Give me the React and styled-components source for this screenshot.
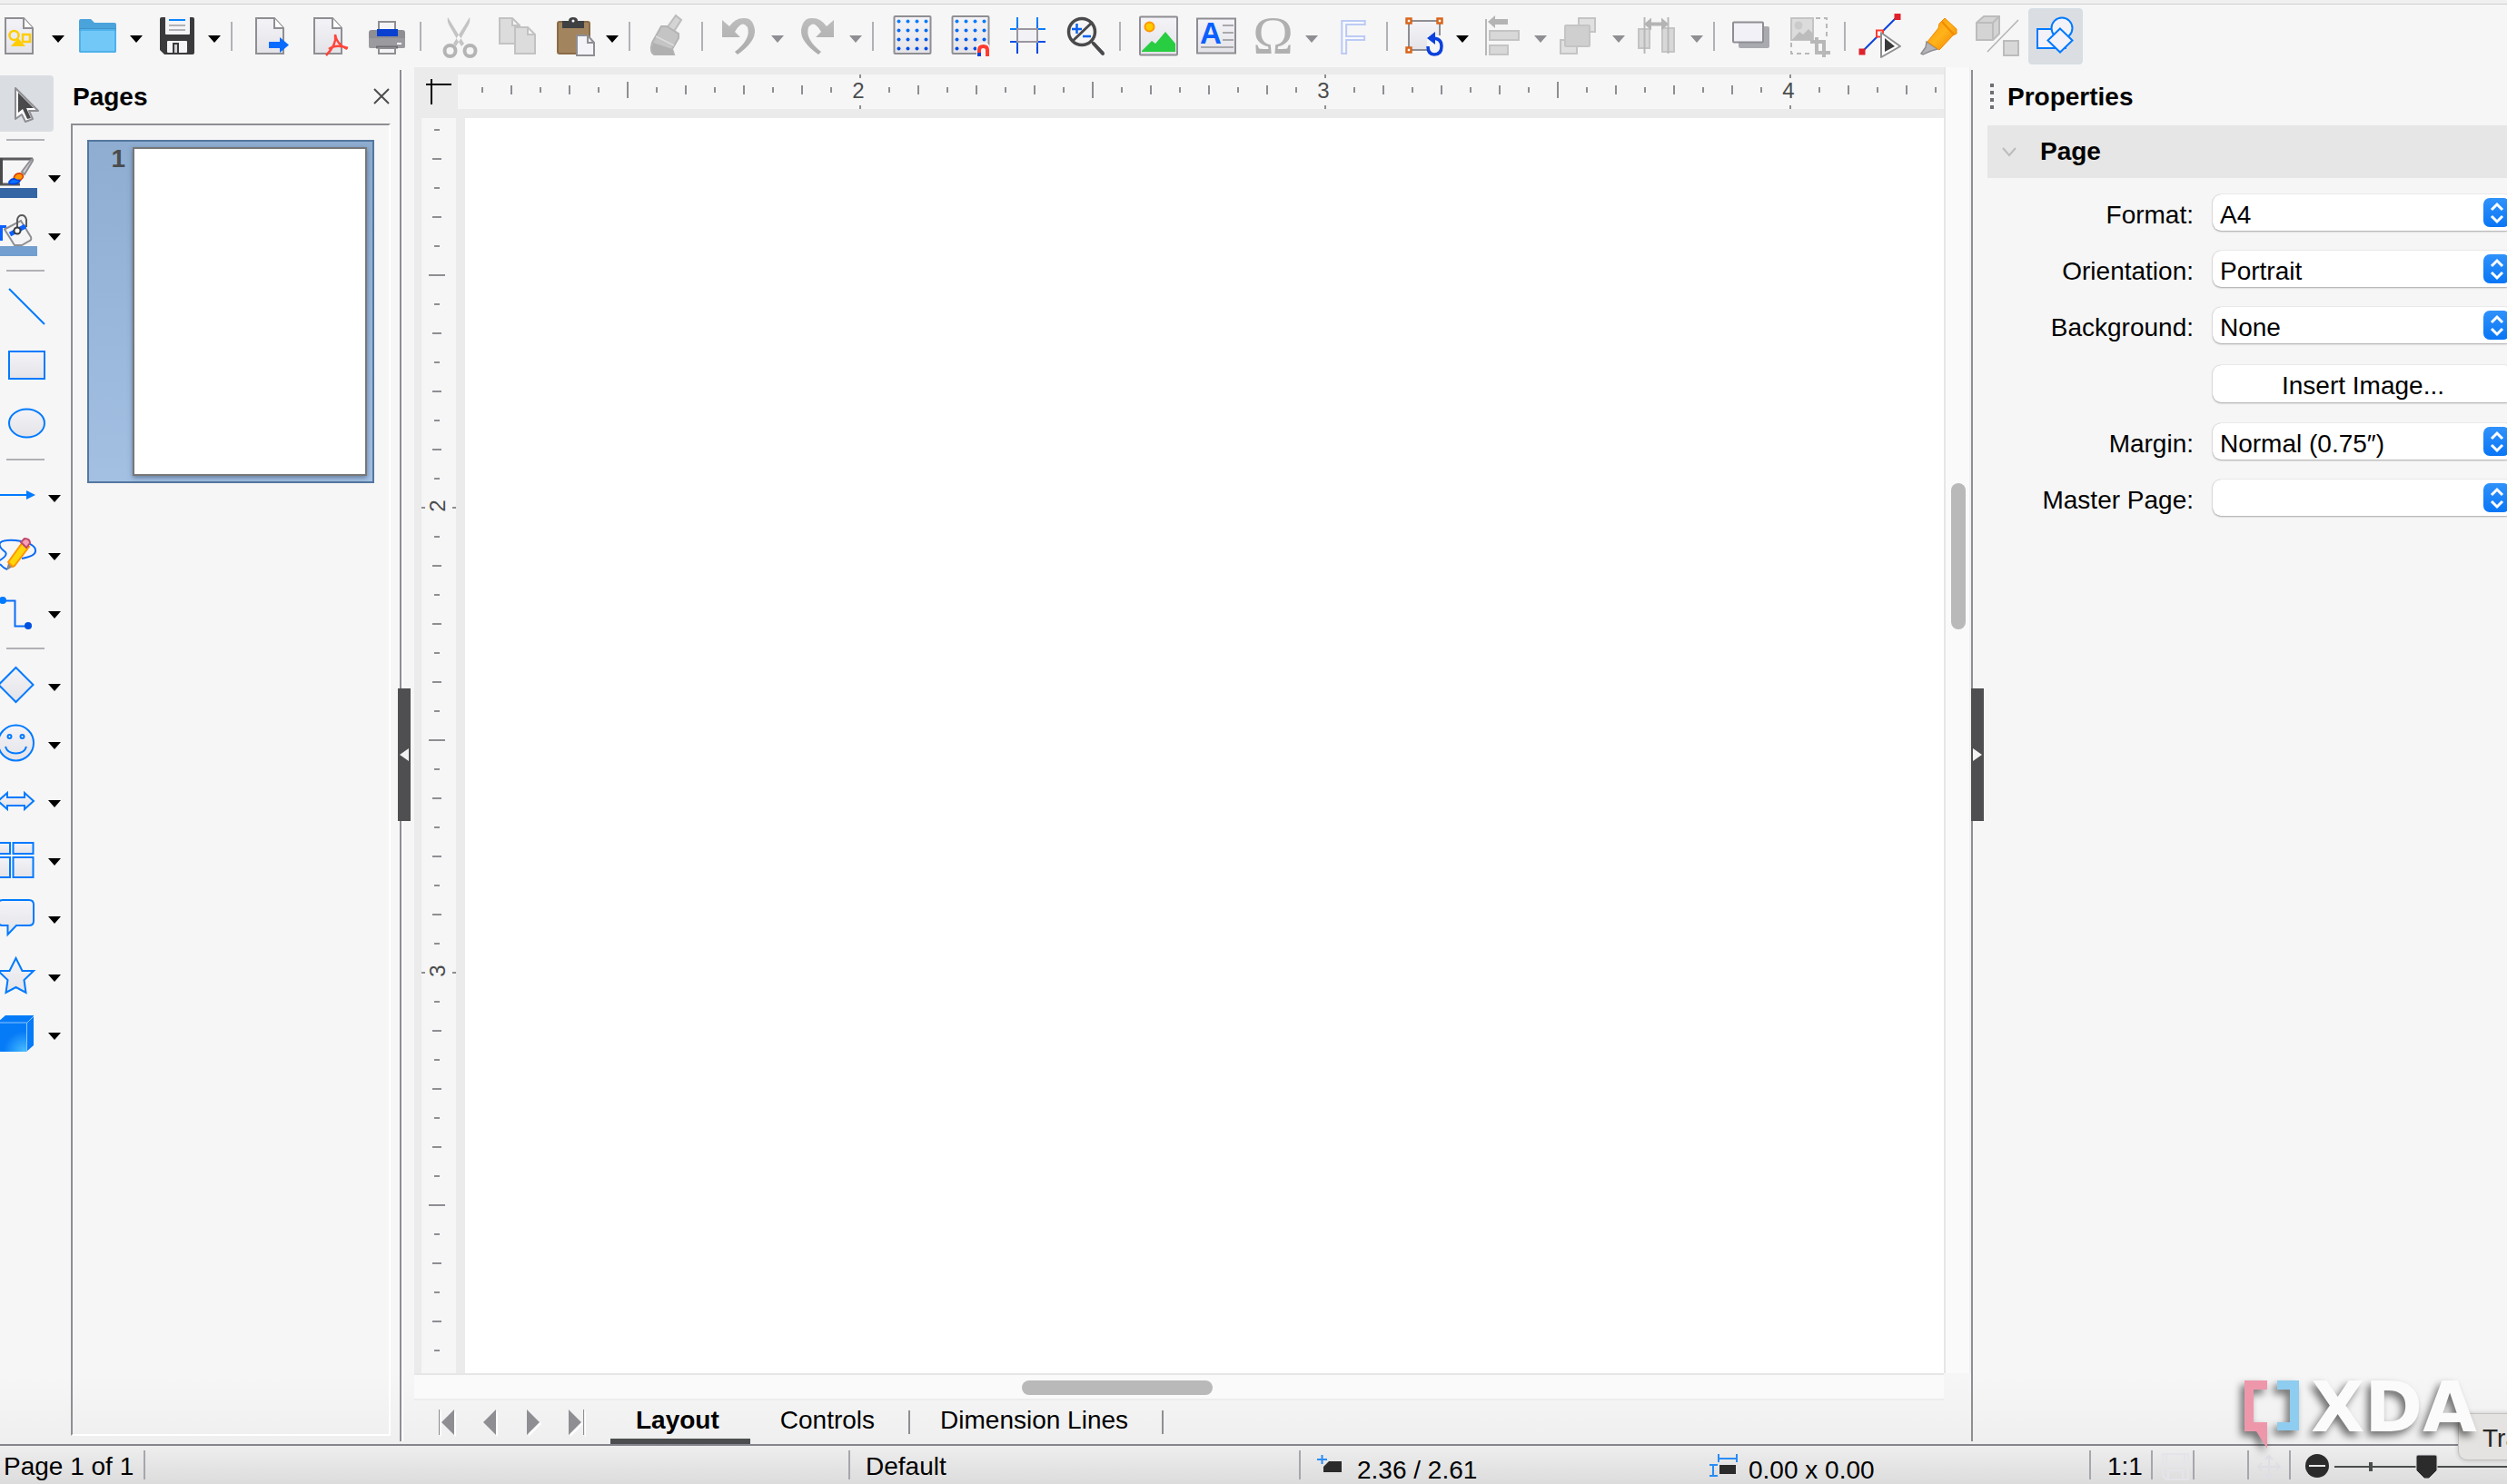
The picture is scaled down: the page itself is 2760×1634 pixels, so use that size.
import React, { useState } from "react";
import styled, { createGlobalStyle } from "styled-components";

const GlobalStyle = createGlobalStyle`
  * {
    box-sizing: border-box;
  }

  body {
    margin: 0;
    overflow: hidden;
    color: #000;
    font-family: "Liberation Sans", Arial, sans-serif;
    font-size: 28px;
    line-height: 32px;
  }

  button,
  select {
    margin: 0;
    padding: 0;
    border: none;
    background: none;
    color: inherit;
    font: inherit;
  }

  svg {
    display: block;
    flex: none;
    overflow: visible;
  }
`;

const Window = styled.div`
  position: relative;
  display: flex;
  flex-direction: column;
  height: 100vh;
  overflow: hidden;
  background: linear-gradient(
    #f6f6f6 0,
    #f6f6f6 calc(100% - 120px),
    #efefef calc(100% - 44px),
    #dcdcdc 100%
  );
`;

/* ---------- top toolbar ---------- */

const Toolbar = styled.header`
  flex: none;
  display: flex;
  align-items: center;
  height: 74px;
  padding-top: 5px;
  overflow: hidden;
  background: linear-gradient(#f0f0f0 4px, #cfcfcf 4px, #cfcfcf 5px, #f6f6f6 5px);
`;

const ToolbarItems = styled.div`
  display: flex;
  align-items: center;
  margin-left: -11px;
`;

const ToolButton = styled.button`
  flex: none;
  display: flex;
  align-items: center;
  justify-content: center;
  width: 60px;
  height: 62px;
  margin: 0 2px;
  border: 1px solid ${({ $active }) => ($active ? "#d3dfe6" : "transparent")};
  border-radius: 4px;
  background: ${({ $active }) => ($active ? "#dadde2" : "none")};
`;

const ArrowButton = styled.button`
  flex: none;
  display: flex;
  align-items: center;
  justify-content: center;
  width: 22px;
  height: 62px;
  padding-top: 6px;
`;

const Separator = styled.div`
  flex: none;
  width: 2px;
  height: 32px;
  margin: 0 7px;
  background: #b1b1b6;
`;

/* ---------- main area ---------- */

const Body = styled.main`
  flex: 1;
  display: flex;
  min-height: 0;
`;

const Tools = styled.nav`
  flex: none;
  width: 78px;
  padding-top: 8px;
`;

const ToolRow = styled.div`
  display: flex;
  align-items: center;
  height: 64px;
`;

const SideTool = styled.button`
  display: flex;
  align-items: center;
  justify-content: flex-end;
  width: ${({ $split }) => ($split ? 48 : 59)}px;
  height: 62px;
  padding-right: 6px;
  border-radius: 0 4px 4px 0;
  background: ${({ $active }) => ($active ? "#dadde2" : "none")};
`;

const SideArrow = styled(ArrowButton)`
  width: 24px;
`;

const SideSeparator = styled.div`
  width: 42px;
  height: 2px;
  margin: 7px 0 7px 7px;
  background: #b1b1b6;
`;

const PagesPanel = styled.aside`
  flex: none;
  display: flex;
  flex-direction: column;
  width: 362px;
  padding: 0 10px 9px 0;
`;

const PanelHeader = styled.div`
  flex: none;
  display: flex;
  align-items: center;
  justify-content: space-between;
  height: 62px;
  padding: 2px 2px 0;
`;

const PanelTitle = styled.h2`
  margin: 0;
  padding-top: 2px;
  font-size: 28px;
  line-height: 32px;
  font-weight: bold;
`;

const PageList = styled.div`
  flex: 1;
  padding: 16px;
  border: 2px solid;
  border-color: #8e8e93 #fff #fff #8e8e93;
`;

const PageItem = styled.button`
  display: flex;
  width: 316px;
  height: 378px;
  padding: 6px;
  border: 2px solid #54779f;
  background: linear-gradient(#8eadd0, #a3c0e3);
`;

const PageNumber = styled.span`
  width: 42px;
  padding-right: 8px;
  color: #4a4c4e;
  font-weight: bold;
  line-height: 26px;
  text-align: right;
`;

const PageThumb = styled.span`
  flex: 1;
  align-self: stretch;
  border: 2px solid #777;
  background: #fff;
  box-shadow: 0 2px 5px rgba(40, 60, 90, 0.5);
`;

const Splitter = styled.div`
  position: relative;
  flex: none;
  width: ${({ $wide }) => ($wide ? 16 : 2)}px;
  margin: 3px 0;
  border-left: 2px solid #8e8e93;
  box-shadow: ${({ $wide }) => ($wide ? "inset 2px 0 #fff" : "none")};
`;

const SplitterHandle = styled.button`
  position: absolute;
  z-index: 1;
  top: calc(50% - 74px);
  left: ${({ $right }) => ($right ? -2 : -4)}px;
  display: flex;
  align-items: center;
  justify-content: center;
  width: 14px;
  height: 146px;
  background: #4f4f51;
`;

const Workspace = styled.section`
  flex: 1;
  display: flex;
  flex-direction: column;
  min-width: 0;
`;

const Editor = styled.div`
  flex: 1;
  display: grid;
  grid-template-columns: 56px 1fr 30px;
  grid-template-rows: 56px 1fr 30px;
  min-height: 0;
`;

const RulerCorner = styled.div`
  padding: 13px;
  background: #ebebeb;
`;

const TopRuler = styled.div`
  min-width: 0;
  padding: 8px 0 10px;
  background: #ebebeb;
`;

const TopRulerScale = styled.div`
  height: 38px;
  margin-left: -8px;
  overflow: hidden;
  background: #f6f6f6;
`;

const LeftRuler = styled.div`
  min-height: 0;
  padding: 0 10px 0 8px;
  background: #ebebeb;
`;

const LeftRulerScale = styled.div`
  height: 100%;
  overflow: hidden;
  background: #f6f6f6;
`;

const Canvas = styled.div`
  background: #fff;
`;

const VerticalScroll = styled.div`
  grid-column: 3;
  grid-row: 1 / 3;
  padding: 458px 4px 0 6px;
  border-left: 2px solid #e6e6e6;
  border-right: 2px solid #f0f0f0;
  background: #fafafa;
`;

const HorizontalScroll = styled.div`
  grid-column: 1 / 3;
  grid-row: 3;
  padding: 6px 0 0 669px;
  border-top: 2px solid #e6e6e6;
  border-bottom: 2px solid #ececec;
  background: #fafafa;
`;

const Thumb = styled.div`
  width: ${({ $vertical }) => ($vertical ? 16 : 210)}px;
  height: ${({ $vertical }) => ($vertical ? 161 : 16)}px;
  border-radius: 8px;
  background: #b9b9b9;
`;

const TabBar = styled.div`
  flex: none;
  display: flex;
  align-items: center;
  height: 48px;
  padding-left: 12px;
`;

const NavButton = styled.button`
  display: flex;
  align-items: center;
  justify-content: center;
  width: 47px;
  height: 46px;
`;

const Tab = styled.button`
  height: 48px;
  padding: ${({ $active }) => ($active ? "2px 34px 0 28px" : "0 37px 4px 33px")};
  border-bottom: ${({ $active }) => ($active ? "6px solid #4b4d4e" : "none")};
  font-weight: ${({ $active }) => ($active ? "bold" : "normal")};
`;

const TabGap = styled.div`
  width: 16px;
`;

const TabDivider = styled.div`
  width: 2px;
  height: 26px;
  background: #8e8e93;
`;

/* ---------- properties ---------- */

const Properties = styled.aside`
  flex: none;
  width: 588px;
`;

const DeckHeader = styled.div`
  display: flex;
  align-items: center;
  gap: 14px;
  height: 64px;
  padding-left: 18px;
`;

const SectionHeader = styled.button`
  display: flex;
  align-items: center;
  gap: 26px;
  width: calc(100% - 16px);
  height: 58px;
  margin-left: 16px;
  padding-left: 16px;
  background: #e6e6e6;
  font-weight: bold;
`;

const Form = styled.form`
  display: grid;
  grid-template-columns: 243px 1fr;
  column-gap: 21px;
  row-gap: 22px;
  align-items: center;
  margin: 18px -7px 0 0;
`;

const Label = styled.label`
  padding-top: 5px;
  text-align: right;
`;

const SelectBox = styled.div`
  position: relative;
`;

const Select = styled.select`
  display: block;
  width: 100%;
  height: 40px;
  padding: 5px 40px 0 8px;
  appearance: none;
  border-radius: 9px;
  background: #fff;
  box-shadow: 0 0 1px rgba(0, 0, 0, 0.35), 0 1px 2px rgba(0, 0, 0, 0.3);
`;

const Stepper = styled.span`
  position: absolute;
  top: 4px;
  right: 4px;
  padding: 4px 6px;
  width: 29px;
  height: 32px;
  border-radius: 7px;
  background: linear-gradient(#2f92fb, #0a76f5);
  pointer-events: none;
`;

const PushButton = styled.button`
  grid-column: 2;
  height: 41px;
  margin: 2px 0 1px;
  padding-top: 4px;
  border-radius: 9px;
  background: #fff;
  box-shadow: 0 0 1px rgba(0, 0, 0, 0.35), 0 1px 2px rgba(0, 0, 0, 0.3);
`;

/* ---------- status bar ---------- */

const StatusBar = styled.footer`
  flex: none;
  display: flex;
  align-items: center;
  height: 44px;
  border-top: 2px solid #85858d;
`;

const StatusCell = styled.div`
  flex: ${({ $grow, $width }) => ($grow ? `${$grow} 1 20px` : `0 0 ${$width}px`)};
  display: flex;
  align-items: center;
  height: 32px;
  padding-top: 3px;
  padding-left: ${({ $pad }) => $pad || 0}px;
  border-right: 2px solid #a6a6ac;
  white-space: nowrap;
`;

const Readout = styled.div`
  flex: 1 1 0;
  display: flex;
  align-items: center;
  gap: 12px;
  padding-left: ${({ $pad }) => $pad}px;
`;

const ReadoutText = styled.span`
  padding-top: 8px;
`;

const ZoomArea = styled.div`
  flex: 0 0 238px;
  padding-left: 14px;
`;

const Tooltip = styled.div`
  position: absolute;
  right: -60px;
  bottom: 26px;
  width: 114px;
  height: 52px;
  padding: 11px 0 0 26px;
  border: 1px solid #c4c2c0;
  border-radius: 10px;
  background: #e5e3e1;
  color: #262626;
  box-shadow: 0 0 5px rgba(0, 0, 0, 0.2);
`;

const Watermark = styled.svg`
  position: absolute;
  right: 34px;
  bottom: 30px;
  filter: drop-shadow(-4px 5px 4px rgba(0, 0, 0, 0.55));
`;

/* ---------- icons ---------- */

const Svg = ({ children }) => (
  <svg width="48" height="48" viewBox="0 0 48 48" fill="none" aria-hidden="true">
    {children}
  </svg>
);

const Gradients = () => (
  <svg width="0" height="0" aria-hidden="true">
    <defs>
      <linearGradient id="paper" x1="0" y1="0" x2="0" y2="1">
        <stop offset="0" stopColor="#f4f3f8" />
        <stop offset="1" stopColor="#e3e3e8" />
      </linearGradient>
      <linearGradient id="blue" gradientUnits="userSpaceOnUse" x1="0" y1="3" x2="0" y2="44">
        <stop offset="0" stopColor="#0a84ff" />
        <stop offset="1" stopColor="#0040dd" />
      </linearGradient>
      <linearGradient id="gray" x1="0" y1="0" x2="0" y2="1">
        <stop offset="0" stopColor="#bdbdbd" />
        <stop offset="1" stopColor="#acacac" />
      </linearGradient>
      <linearGradient id="orange" x1="0" y1="0" x2="1" y2="1">
        <stop offset="0" stopColor="#ff9500" />
        <stop offset="0.5" stopColor="#ffb31a" />
        <stop offset="1" stopColor="#f08000" />
      </linearGradient>
      <radialGradient id="cube" cx="0.9" cy="1" r="0.7">
        <stop offset="0" stopColor="#48bcff" />
        <stop offset="1" stopColor="#067bf7" />
      </radialGradient>
    </defs>
  </svg>
);

const Sheet = ({ x = 10 }) => (
  <g transform={`translate(${x} 3)`}>
    <path d="M1 1h20l10 11v28H1z" fill="url(#paper)" stroke="#8e8e93" strokeWidth="2" />
    <path d="M21 1v11h10" fill="#fff" stroke="#8e8e93" strokeWidth="2" />
  </g>
);

const Dots = () => (
  <>
    <rect x="7.5" y="2" width="40" height="41" rx="1" fill="url(#paper)" stroke="#8e8e93" strokeWidth="2" />
    {[7.5, 17.5, 27.5, 37.5].map((y) =>
      [12.5, 22.5, 32.5, 42.5].map((x) => <circle key={`${x}-${y}`} cx={x} cy={y} r="2" fill="url(#blue)" />)
    )}
  </>
);

const icons = {
  newDoc: (
    <>
      <Sheet x={8} />
      <circle cx="18.5" cy="23" r="5" stroke="#ffcc00" strokeWidth="2.5" />
      <path d="M28 22h8v8h-8z" stroke="#ffcc00" strokeWidth="2.5" />
      <path d="M23 26l8 9H15z" fill="#ffcc00" />
    </>
  ),
  open: (
    <>
      <path d="M4 7q0-2 2-2h11l4 4h22q2 0 2 2v9H4z" fill="#4aa3da" />
      <rect x="4" y="15" width="41" height="27" rx="2" fill="#3f93c9" />
      <rect x="5" y="17" width="39" height="24" rx="2" fill="#72c9f8" stroke="#4fb2ea" strokeWidth="2" />
    </>
  ),
  save: (
    <g transform="translate(1 0)">
      <path d="M6 5q0-2 2-2h34q2 0 2 2v37q0 2-2 2H11l-5-5z" fill="#3a3a3c" />
      <path d="M12 3h27v18q0 1-1 1H13q-1 0-1-1z" fill="#f4f4f7" />
      <path d="M16 6h18" stroke="#0a84ff" strokeWidth="2" />
      <path d="M16 12h18M16 17h18" stroke="#b0b0b5" strokeWidth="2" />
      <rect x="14" y="29" width="22" height="13" rx="1" fill="#f4f4f7" />
      <path d="M21 42V32h5v10" fill="#d0d0d5" stroke="#3a3a3c" strokeWidth="2" />
    </g>
  ),
  export: (
    <>
      <Sheet />
      <path d="M25 30h12v-5l10 8.5-10 8.5v-5H25z" fill="#0a6cff" />
    </>
  ),
  pdf: (
    <>
      <Sheet />
      <path d="M34 22q2 11-10 23M27 38q8-6 21-1M34 22q1 10 13 16" stroke="#ff453a" strokeWidth="2.5" />
    </>
  ),
  print: (
    <g transform="translate(1 0)">
      <path d="M17 8h18v12H17z" fill="#f4f4f7" stroke="#8e8e93" strokeWidth="2" />
      <rect x="6" y="17" width="40" height="20" rx="3" fill="#8e8e93" />
      <path d="M15 16h23v8H15z" fill="#0a40d0" />
      <path d="M6 26h40v9q0 2-2 2H8q-2 0-2-2z" fill="#9a9a9f" />
      <path d="M37 32h5" stroke="#fff" strokeWidth="2" />
      <path d="M14 36h24" stroke="#6e6e73" strokeWidth="3" />
      <path d="M17 37h18v6H17z" fill="#f4f4f7" stroke="#8e8e93" strokeWidth="2" />
    </g>
  ),
  cut: (
    <>
      <path d="M14 3q-1 4 1 8l9 16 5 8 3-3zM38 3q1 4-1 8l-9 16-5 8-3-3z" fill="#c4c4c4" />
      <circle cx="16.5" cy="40" r="6" stroke="#b4b4b4" strokeWidth="4" />
      <circle cx="38.5" cy="40" r="6" stroke="#b4b4b4" strokeWidth="4" />
      <circle cx="26" cy="25" r="1" fill="#fff" />
    </>
  ),
  copy: (
    <g fill="#dcdcdc" stroke="#c2c2c2" strokeWidth="2">
      <path d="M7 4h14l8 8v20H7zM21 4v8h8" />
      <path d="M24 14h14l8 8v21H24zM38 14v8h8" />
    </g>
  ),
  paste: (
    <>
      <rect x="7" y="8" width="35" height="35" rx="2" fill="#a2845e" stroke="#8a6b45" strokeWidth="2" />
      <path d="M12 7h7q0-4 5-4t5 4h7v8H12z" fill="#3f4042" />
      <circle cx="24" cy="7" r="1.5" fill="#fff" />
      <path d="M28 23h12l7 8v14H28z" fill="#f4f3f8" stroke="#8e8e93" strokeWidth="2" />
      <path d="M40 23v8h7" stroke="#8e8e93" strokeWidth="2" />
    </>
  ),
  brush: (
    <>
      <path d="M35 1l6 5-9 14-7-5z" fill="#d4d4d4" stroke="#bcbcbc" strokeWidth="2" />
      <path d="M19 13h6l13 8v5L31 38l2 6H11q-5-3-2-13z" fill="#c4c4c4" stroke="#b4b4b4" strokeWidth="2" />
      <path d="M10 31l21 7 2 7H12q-5-3-2-14z" fill="#b0b0b0" />
      <path d="M13 24l20 10" stroke="#dcdcdc" strokeWidth="1.5" />
    </>
  ),
  undo: <path d="M6 6v19h20l-6-6Q28 5 34 14Q38 27 20 41l3 3Q43 30 42 17Q40 4 31 4Q21 3 14 13z" fill="url(#gray)" />,
  redo: (
    <g transform="translate(49 0) scale(-1 1)">
      <path d="M6 6v19h20l-6-6Q28 5 34 14Q38 27 20 41l3 3Q43 30 42 17Q40 4 31 4Q21 3 14 13z" fill="url(#gray)" />
    </g>
  ),
  grid: <Dots />,
  snap: (
    <>
      <Dots />
      <path d="M34 46V36q0-5 7-5t8 5v10z" fill="#f4f4f7" />
      <path d="M37 42v-3q0-4 4.5-4t4.5 4v7" stroke="#ff3b30" strokeWidth="4" />
      <path d="M37 42v4" stroke="#0040dd" strokeWidth="4" />
    </>
  ),
  helplines: (
    <>
      <rect x="15" y="16" width="22" height="14" fill="#f2f1f6" />
      <path d="M15 3v40M37 3v40" stroke="url(#blue)" strokeWidth="2" />
      <path d="M7 16h39" stroke="#0a7cff" strokeWidth="2" />
      <path d="M7 30h39" stroke="#0a50e8" strokeWidth="2" />
      <rect x="15" y="16" width="22" height="14" stroke="#9a96a0" strokeWidth="2" />
    </>
  ),
  zoom: (
    <>
      <circle cx="22" cy="19" r="14.5" stroke="#4a4a4c" strokeWidth="3.5" />
      <path d="M33 9L12 29M34 31l11 11" stroke="#4a4a4c" strokeWidth="3" strokeLinecap="round" />
      <path d="M35 32l10 11" stroke="#4a4a4c" strokeWidth="4" strokeLinecap="round" />
      <path d="M11 16h11M16.500 10v11M23 24h9" stroke="#0a60f0" strokeWidth="2.5" />
    </>
  ),
  image: (
    <>
      <rect x="6" y="2.5" width="41" height="42" rx="1" fill="url(#paper)" stroke="#8e8e93" strokeWidth="2" />
      <circle cx="16.5" cy="13.5" r="5" fill="#ffcc00" stroke="#ff9500" strokeWidth="2" />
      <path d="M8 41v-1l11-11 4 3 11-13 11 13v9z" fill="#28cd41" />
    </>
  ),
  textbox: (
    <>
      <rect x="5" y="4.5" width="42" height="38" fill="url(#paper)" stroke="#8e8e93" strokeWidth="2" />
      <text x="20" y="32" textAnchor="middle" fontSize="33" fontWeight="bold" fill="#0a60ff">
        A
      </text>
      <path d="M33 12h12M33 20h12M33 28h12M9 36h36" stroke="#a8a8ad" strokeWidth="2" />
    </>
  ),
  omega: (
    <text x="24.5" y="43" textAnchor="middle" fontSize="60" fontFamily="Liberation Serif" fill="#b0b0b0">
      Ω
    </text>
  ),
  fontwork: (
    <text x="26" y="43" textAnchor="middle" fontSize="52" fill="#f8f8ff" stroke="#bccbf4" strokeWidth="2">
      F
    </text>
  ),
  rotate: (
    <>
      <path d="M8 7h34v32H8z" fill="url(#paper)" stroke="#8e8e93" strokeWidth="2" />
      <path d="M28 23h20v24H28z" fill="#f6f6f6" />
      <g fill="#fff" stroke="#d9651b" strokeWidth="2.5">
        <path d="M5.500 4.500h5v5h-5zM39.500 4.500h5v5h-5zM5.500 36.500h5v5h-5z" />
      </g>
      <path d="M34 26q10 0 10 9 0 9-8 9-7 0-7-9" stroke="#0a40dd" strokeWidth="3.5" />
      <path d="M37 19v14l-9-7z" fill="#0a40dd" />
    </>
  ),
  align: (
    <>
      <path d="M7 5v40" stroke="#b8b8b8" strokeWidth="2" />
      <path d="M9 8l8-7v4h14v6H17v4z" fill="#b4b4b4" />
      <path d="M11 18h32v10H11zM11 34h20v10H11z" fill="#d8d8d8" stroke="#c4c4c4" strokeWidth="2" />
    </>
  ),
  arrange: (
    <g stroke="#c4c4c4" strokeWidth="2" transform="translate(-1 0)">
      <path d="M24 4h18v15H24zM4 28h18v15H4z" fill="#e0e0e0" />
      <rect x="9" y="12" width="27" height="23" rx="1" fill="#cfcfcf" />
    </g>
  ),
  distribute: (
    <>
      <path d="M3 16h12v21H3zM29 15h13v26H29z" fill="#d8d8d8" stroke="#c4c4c4" strokeWidth="2" />
      <path d="M9.500 3v40M35.500 3v40" stroke="#b8b8b8" strokeWidth="2" />
      <path d="M9 10.500l8-7v5h11v-5l8 7-8 7v-5H17v5z" fill="#b4b4b4" />
    </>
  ),
  shadow: (
    <>
      <rect x="11" y="13" width="34" height="24" rx="2" fill="#a9a9b0" />
      <rect x="5" y="8.5" width="33" height="22" rx="1" fill="#f2f1f7" stroke="#8e8e93" strokeWidth="2" />
    </>
  ),
  crop: (
    <>
      <rect x="5" y="4" width="24" height="24" fill="#dcdcdc" stroke="#c4c4c4" strokeWidth="2" />
      <circle cx="13" cy="12" r="4.5" fill="#cbcbcb" />
      <path d="M6 28l8-9 4 3 6-6 5 5v7z" fill="#bcbcbc" />
      <path d="M32 4h12v20M5 31v12h22" stroke="#b8b8b8" strokeWidth="2" strokeDasharray="5 4" />
      <path d="M33 25v17h15M26 30h15v17" stroke="#b8b8b8" strokeWidth="4" />
    </>
  ),
  points: (
    <>
      <path d="M42 2L3 41" stroke="#0a40dd" strokeWidth="2" />
      <path d="M38.500-1h7v7h-7zM-.500 37.500h7v7h-7z" fill="#e0202a" />
      <path d="M19 17.500h7v7h-7z" fill="#fff" stroke="#ff3b30" strokeWidth="2" />
      <path d="M24 20v27l21-12z" fill="#fff" stroke="#8e8e93" strokeWidth="2" strokeLinejoin="round" />
      <path d="M28 26v15l11-6z" fill="#3a3a3c" />
    </>
  ),
  glue: (
    <>
      <path d="M10 30l-1 6-5 7 2 1 9-4 7-2z" fill="#b4b4b9" stroke="#8e8e93" strokeWidth="1.5" />
      <path d="M30 4l13 12v5l-4 2-15 16-13-9 12-15 1-5z" fill="url(#orange)" stroke="#f08a00" strokeWidth="1" />
      <path d="M27 8l13 14" stroke="#f08a00" strokeWidth="2" />
    </>
  ),
  extrusion: (
    <>
      <path d="M1 9l8-7h17v19l-7 7H1z" fill="#d4d4d4" stroke="#bcbcbc" strokeWidth="2" />
      <path d="M1 9h18v19M19 9l7-7" stroke="#bcbcbc" strokeWidth="2" />
      <path d="M47 6L13 41" stroke="#b4b4b4" strokeWidth="1.5" />
      <path d="M31 29h16v16H31z" fill="#d8d8d8" stroke="#bcbcbc" strokeWidth="2" />
    </>
  ),
  shapes: (
    <g fill="#f2f2f8" stroke="#007aff" strokeWidth="2">
      <path d="M4 16h31v21H4z" />
      <circle cx="31" cy="15" r="11.5" />
      <path d="M29 15.500l13.500 13-13.500 13-13.500-13z" />
    </g>
  ),
  select: (
    <>
      <path
        d="M12 7v34l7-5 4 8 8-3-4-9h10z"
        fill="#fff"
        stroke="#8e8e93"
        strokeWidth="2"
        strokeLinejoin="round"
      />
      <path d="M15 12v22l5-4 5 11 4-1-5-11h8z" fill="#4a4a4c" />
    </>
  ),
  lineColor: (
    <>
      <path d="M42 5H6v28h22" fill="#f6f6f6" stroke="#5a5a5c" strokeWidth="3" />
      <path d="M6 4v29" stroke="#4a4a4c" strokeWidth="6" />
      <path d="M30 19L40 6q3-2 2 1L33 22z" fill="#d4d4d9" stroke="#8e8e93" strokeWidth="2" />
      <path d="M21 27q1-7 8-6 5 3 0 7-4 2-8-1z" fill="#ff9500" stroke="#d93a00" strokeWidth="1.5" />
      <path d="M16 30q4-5 8-2 4 0 4 1-3 5-12 3z" fill="#0a72ff" stroke="#0040dd" strokeWidth="1.5" />
      <path d="M0 37h47v11H0z" fill="#3465a4" />
    </>
  ),
  fillColor: (
    <>
      <path d="M0 14h13v3h-4v14H0z" fill="#0a60ff" />
      <path d="M11 18.500L29 9l11 18q1 3-1 4l-9 5h-8z" fill="#f4f4f7" stroke="#8e8e93" strokeWidth="2" />
      <path d="M17 24l17-9" stroke="#0a60ff" strokeWidth="5" />
      <path d="M25 17V8q1-5 5-5t5 5v8" stroke="#5a5a5c" strokeWidth="2" />
      <circle cx="25" cy="20" r="3.5" fill="#fff" stroke="#3a3a3c" strokeWidth="2" />
      <path d="M0 37h47v11H0z" fill="#729fcf" />
    </>
  ),
  line: <path d="M5 4l39 39" stroke="#007aff" strokeWidth="2" />,
  rect: <path d="M5 9h39v30H5z" fill="url(#paper)" stroke="#007aff" strokeWidth="2" />,
  ellipse: <ellipse cx="24.5" cy="24" rx="19.5" ry="15.5" fill="url(#paper)" stroke="#007aff" strokeWidth="2" />,
  arrowLine: (
    <>
      <path d="M0 23h36" stroke="#007aff" strokeWidth="2" />
      <path d="M35 18l10 5-10 5z" fill="#007aff" />
    </>
  ),
  pencil: (
    <>
      <path
        d="M14 41q-5-2-8-6M4 32q11-6 8-10Q4 16 6 12Q9 8 23 9Q45 12 45 20Q46 26 30 29"
        stroke="#0a6cf5"
        strokeWidth="2"
      />
      <path d="M14 41l2-9 6 4z" fill="#8e8e93" stroke="#77777c" strokeWidth="1" />
      <path d="M15 33L31 11l7 5-16 21-2 1z" fill="#ffd60a" stroke="#ff9500" strokeWidth="2" />
      <path d="M29 11l4-4q6 0 6 5l-4 5z" fill="#f3a0b8" stroke="#c04868" strokeWidth="2" />
    </>
  ),
  connector: (
    <>
      <path d="M9 11.500h13.500v28H37" stroke="#0a6cf5" strokeWidth="2" />
      <circle cx="9" cy="11" r="4" fill="#007aff" />
      <circle cx="37" cy="39" r="4" fill="#0050e0" />
    </>
  ),
  diamond: <path d="M23.500 5l19 19-19 19-19-19z" fill="url(#paper)" stroke="#007aff" strokeWidth="2" />,
  smiley: (
    <g stroke="#007aff" strokeWidth="2">
      <circle cx="23.5" cy="24" r="19.5" fill="url(#paper)" />
      <circle cx="16.5" cy="17" r="2" />
      <circle cx="30.5" cy="17" r="2" />
      <path d="M12 28q2 7.500 11.500 7.500T35 28" />
    </g>
  ),
  doubleArrow: (
    <path
      d="M4 24l10-9v5h19v-5l10 9-10 9v-4H14v4z"
      fill="url(#paper)"
      stroke="#007aff"
      strokeWidth="2"
    />
  ),
  flowchart: (
    <g fill="url(#paper)" stroke="#007aff" strokeWidth="2">
      <path d="M4 6h13v12H4zM20.500 6h22v12h-22z" />
      <path d="M4 22h13v22H4zM20.500 22h22v22h-22z" />
    </g>
  ),
  callout: (
    <path
      d="M9 5h29q5 0 5 5v18q0 5-5 5H24l-9.500 10V33H9q-5 0-5-5V10q0-5 5-5z"
      fill="url(#paper)"
      stroke="#007aff"
      strokeWidth="2"
    />
  ),
  star: (
    <path
      d="M23.500 5l7 14h12.500l-10.500 10 2 14-11-6-11 6 2-14L4 19h12.500z"
      fill="url(#paper)"
      stroke="#007aff"
      strokeWidth="2"
    />
  ),
  cube: (
    <>
      <path d="M4 11l8-7h31v33l-8 7H4z" fill="#067bf7" />
      <path d="M4 12h32v32H4z" fill="url(#cube)" />
      <path d="M4 12h31.500v32M36 12l7-7" stroke="#8cc6ff" strokeWidth="1" />
    </>
  ),
};

const DownArrow = ({ disabled }) => (
  <svg width="14" height="8" viewBox="0 0 14 8" aria-hidden="true">
    <path d="M0 0h14L7 8z" fill={disabled ? "#8e8e93" : "#000"} />
  </svg>
);

/* ---------- data ---------- */

const toolbarItems = [
  { icon: "newDoc", label: "New", menu: true },
  { icon: "open", label: "Open", menu: true },
  { icon: "save", label: "Save", menu: true },
  null,
  { icon: "export", label: "Export" },
  { icon: "pdf", label: "Export as PDF" },
  { icon: "print", label: "Print" },
  null,
  { icon: "cut", label: "Cut", disabled: true },
  { icon: "copy", label: "Copy", disabled: true },
  { icon: "paste", label: "Paste", menu: true },
  null,
  { icon: "brush", label: "Clone formatting", disabled: true },
  null,
  { icon: "undo", label: "Undo", menu: true, disabled: true },
  { icon: "redo", label: "Redo", menu: true, disabled: true },
  null,
  { icon: "grid", label: "Display grid" },
  { icon: "snap", label: "Snap to grid" },
  { icon: "helplines", label: "Helplines while moving" },
  { icon: "zoom", label: "Zoom and pan" },
  null,
  { icon: "image", label: "Insert image" },
  { icon: "textbox", label: "Insert text box" },
  { icon: "omega", label: "Special character", menu: true, disabled: true },
  { icon: "fontwork", label: "Fontwork", disabled: true },
  null,
  { icon: "rotate", label: "Transformations", menu: true },
  { icon: "align", label: "Align", menu: true, disabled: true },
  { icon: "arrange", label: "Arrange", menu: true, disabled: true },
  { icon: "distribute", label: "Distribute", menu: true, disabled: true },
  null,
  { icon: "shadow", label: "Shadow" },
  { icon: "crop", label: "Crop image", disabled: true },
  null,
  { icon: "points", label: "Toggle point edit mode" },
  { icon: "glue", label: "Gluepoints" },
  { icon: "extrusion", label: "Toggle extrusion", disabled: true },
  { icon: "shapes", label: "Show draw functions", active: true },
];

const sideTools = [
  { icon: "select", label: "Select" },
  null,
  { icon: "lineColor", label: "Line color", menu: true },
  { icon: "fillColor", label: "Fill color", menu: true },
  null,
  { icon: "line", label: "Insert line" },
  { icon: "rect", label: "Rectangle" },
  { icon: "ellipse", label: "Ellipse" },
  null,
  { icon: "arrowLine", label: "Lines and arrows", menu: true },
  { icon: "pencil", label: "Curves and polygons", menu: true },
  { icon: "connector", label: "Connectors", menu: true },
  null,
  { icon: "diamond", label: "Basic shapes", menu: true },
  { icon: "smiley", label: "Symbol shapes", menu: true },
  { icon: "doubleArrow", label: "Block arrows", menu: true },
  { icon: "flowchart", label: "Flowchart", menu: true },
  { icon: "callout", label: "Callouts", menu: true },
  { icon: "star", label: "Stars and banners", menu: true },
  { icon: "cube", label: "3D objects", menu: true },
];

const fields = [
  { id: "format", label: "Format:", options: ["A4", "A5", "Letter"] },
  { id: "orientation", label: "Orientation:", options: ["Portrait", "Landscape"] },
  { id: "background", label: "Background:", options: ["None", "Color", "Image"], insert: true },
  { id: "margin", label: "Margin:", options: ["Normal (0.75″)", "None"] },
  { id: "master", label: "Master Page:", options: ["", "Default"] },
];

const navShapes = [
  { label: "First", path: "M0 0h1v28H0zM17 0v28L3 14z" },
  { label: "Previous", path: "M16 0v28L2 14z" },
  { label: "Next", path: "M3 0v28l14-14z" },
  { label: "Last", path: "M2 0v28l14-14zM18 0h1v28h-1z" },
];

/* ---------- rulers ---------- */

const STEP = 32;
const PER_INCH = 16;

const tickLength = (n) => {
  if (n % 8 === 0) return 18;
  return n % 2 === 0 ? 10 : 6;
};

const Ruler = ({ vertical, start, count }) => {
  const ticks = Array.from({ length: count }, (_, i) => i + 3);
  const bar = (at, from, size) =>
    vertical ? { x: from, y: at, width: size, height: 2 } : { x: at, y: from, width: 2, height: size };

  return (
    <svg width="100%" height="100%" fill="#8e8e93" aria-hidden="true">
      {ticks.map((n) => {
        const at = start + n * STEP;
        if (n % PER_INCH !== 0) {
          const len = tickLength(n);
          return <rect key={n} {...bar(at, 17 - len / 2, len)} />;
        }
        return (
          <g key={n}>
            <rect {...bar(at, 0, 4)} />
            <rect {...bar(at, 34, 4)} />
            <text
              transform={vertical ? `translate(26 ${at - 1}) rotate(-90)` : `translate(${at - 1} 26)`}
              textAnchor="middle"
              fontSize="24"
              fill="#4b4d4e"
            >
              {1 + n / PER_INCH}
            </text>
          </g>
        );
      })}
    </svg>
  );
};

/* ---------- app ---------- */

const App = () => {
  const [tool, setTool] = useState("select");
  const [tab, setTab] = useState("Layout");

  return (
    <>
      <GlobalStyle />
      <Gradients />
      <Window>
        <Toolbar>
          <ToolbarItems>
            {toolbarItems.map((item, i) =>
              item ? (
                <React.Fragment key={item.icon}>
                  <ToolButton type="button" aria-label={item.label} disabled={item.disabled} $active={item.active}>
                    <Svg>{icons[item.icon]}</Svg>
                  </ToolButton>
                  {item.menu && (
                    <ArrowButton type="button" aria-label={`${item.label} options`} disabled={item.disabled}>
                      <DownArrow disabled={item.disabled} />
                    </ArrowButton>
                  )}
                </React.Fragment>
              ) : (
                <Separator key={i} />
              )
            )}
          </ToolbarItems>
        </Toolbar>

        <Body>
          <Tools>
            {sideTools.map((item, i) =>
              item ? (
                <ToolRow key={item.icon}>
                  <SideTool
                    type="button"
                    aria-label={item.label}
                    $split={item.menu}
                    $active={tool === item.icon}
                    onClick={() => setTool(item.icon)}
                  >
                    <Svg>{icons[item.icon]}</Svg>
                  </SideTool>
                  {item.menu && (
                    <SideArrow type="button" aria-label={`${item.label} options`}>
                      <DownArrow />
                    </SideArrow>
                  )}
                </ToolRow>
              ) : (
                <SideSeparator key={i} />
              )
            )}
          </Tools>

          <PagesPanel>
            <PanelHeader>
              <PanelTitle>Pages</PanelTitle>
              <button type="button" aria-label="Close">
                <svg width="16" height="16" viewBox="0 0 16 16">
                  <path d="M0 0l16 16M16 0L0 16" stroke="#4b4d4e" strokeWidth="2" />
                </svg>
              </button>
            </PanelHeader>
            <PageList>
              <PageItem type="button">
                <PageNumber>1</PageNumber>
                <PageThumb />
              </PageItem>
            </PageList>
          </PagesPanel>

          <Splitter $wide>
            <SplitterHandle type="button" aria-label="Collapse pages">
              <svg width="10" height="14" viewBox="0 0 10 14">
                <path d="M10 0v14L0 7z" fill="#f2f2f2" />
              </svg>
            </SplitterHandle>
          </Splitter>

          <Workspace>
            <Editor>
              <RulerCorner>
                <svg width="28" height="28" viewBox="0 0 28 28">
                  <path d="M0 6h28M6 0v28" stroke="#000" strokeWidth="2" />
                </svg>
              </RulerCorner>
              <TopRuler>
                <TopRulerScale>
                  <Ruler start={-70} count={58} />
                </TopRulerScale>
              </TopRuler>
              <LeftRuler>
                <LeftRulerScale>
                  <Ruler vertical start={-84} count={44} />
                </LeftRulerScale>
              </LeftRuler>
              <Canvas />
              <VerticalScroll>
                <Thumb $vertical />
              </VerticalScroll>
              <HorizontalScroll>
                <Thumb />
              </HorizontalScroll>
            </Editor>
            <TabBar>
              {navShapes.map(({ label, path }) => (
                <NavButton key={label} type="button" aria-label={label}>
                  <svg width="18" height="28" viewBox="0 0 18 28">
                    <path d={path} fill="#fff" transform="translate(2 2)" />
                    <path d={path} fill="#8e8e93" />
                  </svg>
                </NavButton>
              ))}
              <TabGap />
              <Tab type="button" $active={tab === "Layout"} onClick={() => setTab("Layout")}>
                Layout
              </Tab>
              <Tab type="button" $active={tab === "Controls"} onClick={() => setTab("Controls")}>
                Controls
              </Tab>
              <TabDivider />
              <Tab type="button" $active={tab === "Dimension"} onClick={() => setTab("Dimension")}>
                Dimension Lines
              </Tab>
              <TabDivider />
            </TabBar>
          </Workspace>

          <Splitter>
            <SplitterHandle type="button" aria-label="Collapse sidebar" $right>
              <svg width="10" height="14" viewBox="0 0 10 14">
                <path d="M0 0v14l10-7z" fill="#f2f2f2" />
              </svg>
            </SplitterHandle>
          </Splitter>

          <Properties>
            <DeckHeader>
              <svg width="6" height="30" viewBox="0 0 6 30">
                <path d="M3 1v30" stroke="#6e6e73" strokeWidth="4" strokeDasharray="4 4" />
              </svg>
              <PanelTitle>Properties</PanelTitle>
            </DeckHeader>
            <SectionHeader type="button">
              <svg width="16" height="10" viewBox="0 0 16 10" fill="none">
                <path d="M1 1l7 8 7-8" stroke="#bcbcbc" strokeWidth="2" />
              </svg>
              Page
            </SectionHeader>
            <Form>
              {fields.map(({ id, label, options, insert }) => (
                <React.Fragment key={id}>
                  <Label htmlFor={id}>{label}</Label>
                  <SelectBox>
                    <Select id={id}>
                      {options.map((option) => (
                        <option key={option}>{option}</option>
                      ))}
                    </Select>
                    <Stepper>
                      <svg width="16" height="24" viewBox="0 0 16 24" fill="none">
                        <path d="M3 9l6-6 6 6M3 16l6 6 6-6" stroke="#fff" strokeWidth="3" />
                      </svg>
                    </Stepper>
                  </SelectBox>
                  {insert && <PushButton type="button">Insert Image...</PushButton>}
                </React.Fragment>
              ))}
            </Form>
          </Properties>
        </Body>

        <StatusBar>
          <StatusCell $width={160} $pad={4}>
            Page 1 of 1
          </StatusCell>
          <StatusCell $grow={756} />
          <StatusCell $grow={476} $pad={17}>
            Default
          </StatusCell>
          <StatusCell $grow={850}>
            <Readout $pad={18}>
              <svg width="32" height="32" viewBox="0 0 32 32" fill="none">
                <path d="M0 8h11M5.500 3v10" stroke="#2a8cf5" strokeWidth="2" />
                <path d="M13 10h14v12H7v-6z" fill="#2b2b2b" />
              </svg>
              <ReadoutText>2.36 / 2.61</ReadoutText>
            </Readout>
            <Readout $pad={12}>
              <svg width="32" height="32" viewBox="0 0 32 32" fill="none">
                <path d="M11 7h20M11 2v9M31 2v9M5 14v12M1 14h9M1 26h9" stroke="#2a8cf5" strokeWidth="2" />
                <path d="M12 14h18v10H12z" fill="#2b2b2b" />
              </svg>
              <ReadoutText>0.00 x 0.00</ReadoutText>
            </Readout>
          </StatusCell>
          <StatusCell $width={68} $pad={18}>
            1:1
          </StatusCell>
          <StatusCell $width={46} $pad={9}>
            <svg width="32" height="32" viewBox="0 0 32 32" fill="none">
              <path d="M2 2h28v28H6l-4-4zM6 2v13h20V2M8 30V20h16v10" stroke="#e4e4ea" strokeWidth="2" />
            </svg>
          </StatusCell>
          <StatusCell $width={60} />
          <StatusCell $width={46} $pad={8}>
            <svg width="28" height="28" viewBox="0 0 28 28" fill="none">
              <path
                d="M14 2v24M2 14h24M10 6l4-4 4 4M10 22l4 4 4-4M6 10l-4 4 4 4M22 10l4 4-4 4"
                stroke="#dedee4"
                strokeWidth="2"
              />
            </svg>
          </StatusCell>
          <ZoomArea>
            <svg width="224" height="28" viewBox="0 0 224 28" fill="none">
              <circle cx="15" cy="15" r="13" fill="#2b2b2b" />
              <path d="M6 15h18" stroke="#e6e6e6" strokeWidth="2" />
              <path d="M34 16h200" stroke="#4b4d4e" strokeWidth="2" />
              <path d="M72 11h4v10h-4z" fill="#4b4d4e" />
              <path
                d="M126 3h19q2 0 2 2v15l-9 9h-5l-9-9V5q0-2 2-2z"
                fill="#2b2b2b"
                stroke="#d8d8de"
                strokeWidth="1"
              />
            </svg>
          </ZoomArea>
        </StatusBar>

        <Tooltip role="tooltip">Tra</Tooltip>

        <Watermark width="258" height="84" viewBox="0 0 258 84" role="img" aria-label="XDA">
          <path d="M3 0h25v10H13v36h15v29L16 56H3z" fill="#ee97ab" />
          <path d="M39 0h24v55H39V46h14V10H39z" fill="#8ecdef" />
          <text x="76" y="56" fontSize="77" fontFamily="DejaVu Sans" fontWeight="bold" fill="#fbfbfb">
            XDA
          </text>
        </Watermark>
      </Window>
    </>
  );
};

export default App;
